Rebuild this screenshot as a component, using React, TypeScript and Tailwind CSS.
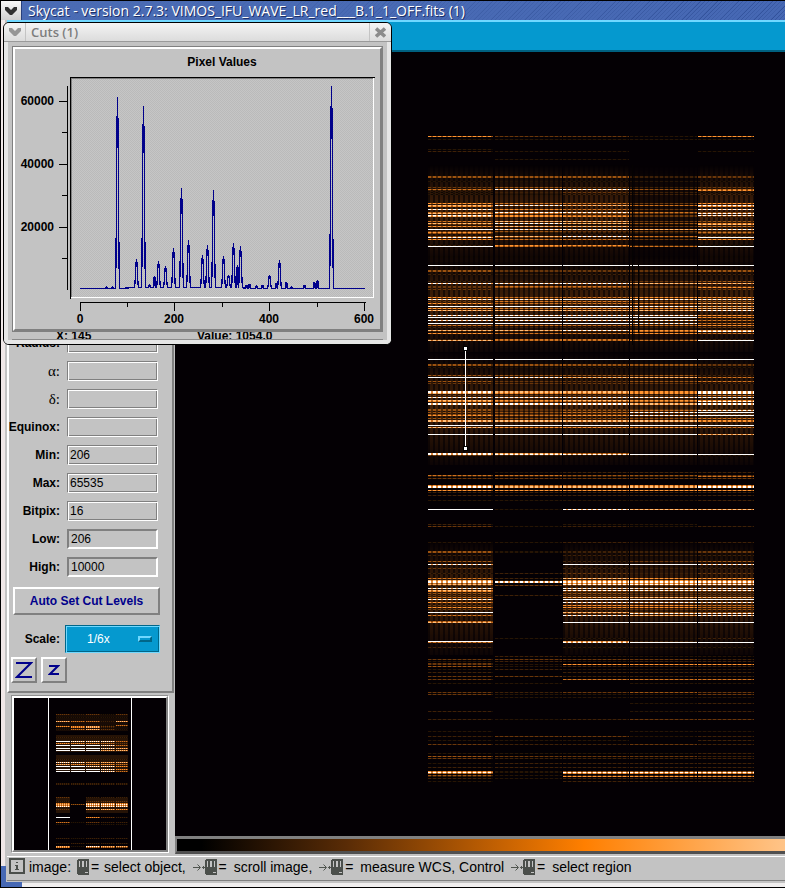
import React, { useState } from "react";
import { clsx } from "clsx";

type Row = [y: number, thickness: number, levels: string];

const SEGMENTS = [
  [428, 493],
  [495, 562],
  [563, 629],
  [630, 697],
  [698, 754],
];

const THUMB_SEGMENTS = [
  [56, 70],
  [71, 85],
  [86, 100],
  [101, 115],
  [116, 128],
];

// brightness 0-9 of the dashes and of the line under them
const BRIGHT = ["", "#261404", "#3e2007", "#6a360a", "#9c5210", "#d0721e", "#ff9430", "#ffc07c", "#ffffff", "#ffffff"];
const DIM = ["", "#0e0702", "#1a0d03", "#341a05", "#4e2806", "#743b0a", "#9c5010", "#c4661a", "#e08a3c", "#ffffff"];

// one digit for each of the five segments
const ROWS: Row[] = [
  [136, 1, "63316"], [139, 1, "11111"], [149, 1, "10000"], [151, 1, "21101"], [159, 1, "01100"],
  [176, 2, "44423"], [181, 1, "11111"], [187, 1, "34323"], [189, 1, "58845"], [190, 1, "20006"],
  [192, 1, "12321"], [194, 1, "11222"], [203, 1, "65536"], [205, 1, "78758"], [206, 1, "60006"],
  [209, 1, "86538"], [212, 1, "58854"], [213, 1, "75438"], [215, 1, "86538"], [216, 1, "76633"],
  [221, 1, "57734"], [223, 1, "78746"], [224, 1, "31117"], [226, 1, "67735"], [229, 1, "98878"],
  [231, 1, "34333"], [232, 1, "62225"], [233, 1, "41113"], [236, 1, "47853"], [237, 1, "83229"],
  [239, 1, "65536"], [245, 1, "26621"], [246, 1, "95459"], [265, 1, "99999"], [270, 2, "43334"],
  [274, 1, "22222"], [281, 1, "22234"], [283, 1, "88877"], [286, 1, "35533"], [287, 1, "34436"],
  [289, 1, "32223"], [297, 1, "65566"], [299, 1, "88988"], [301, 1, "35534"], [303, 1, "65567"],
  [306, 1, "99987"], [308, 1, "65667"], [310, 1, "77778"], [315, 1, "88886"], [317, 1, "99996"],
  [320, 1, "88885"], [323, 1, "99985"], [325, 1, "55556"], [327, 1, "22223"], [330, 1, "77867"],
  [331, 1, "22258"], [333, 1, "65565"], [339, 1, "25522"], [340, 1, "75559"], [359, 1, "99999"],
  [364, 2, "44443"], [367, 1, "11111"], [375, 1, "44442"], [377, 1, "98775"], [381, 1, "43345"],
  [383, 1, "33332"], [391, 2, "87768"], [393, 1, "76668"], [395, 1, "33335"], [397, 1, "88888"],
  [400, 1, "76766"], [401, 1, "65558"], [403, 2, "88878"], [409, 1, "43333"], [410, 1, "43458"],
  [412, 1, "44589"], [414, 1, "43323"], [415, 1, "65689"], [418, 1, "44445"], [420, 2, "77776"],
  [425, 1, "99999"], [427, 1, "76665"], [434, 1, "99997"], [453, 1, "87500"], [454, 1, "88899"],
  [455, 1, "32111"], [472, 1, "01222"], [475, 1, "55443"], [476, 1, "22225"], [478, 1, "33333"],
  [485, 1, "65566"], [486, 2, "87778"], [490, 1, "66666"], [492, 1, "22222"], [495, 1, "22222"],
  [500, 1, "11112"], [509, 1, "91877"], [524, 1, "20110"], [526, 1, "31212"], [542, 1, "11212"],
  [551, 2, "41223"], [555, 1, "20222"], [561, 1, "40234"], [564, 1, "80998"], [568, 1, "30222"],
  [573, 1, "22323"], [578, 1, "52766"], [580, 1, "71666"], [581, 2, "88888"], [583, 1, "50665"],
  [584, 1, "70888"], [585, 1, "33333"], [588, 1, "80888"], [590, 1, "70888"], [591, 1, "60333"],
  [593, 1, "40433"], [595, 1, "32333"], [597, 1, "50777"], [599, 1, "80999"], [602, 1, "60888"],
  [605, 1, "30665"], [607, 1, "60665"], [609, 1, "30334"], [612, 1, "90744"], [613, 1, "00388"],
  [615, 1, "50878"], [621, 1, "50000"], [622, 1, "70999"], [638, 1, "01112"], [641, 1, "90720"],
  [642, 1, "50899"], [647, 1, "20111"], [656, 1, "02111"], [659, 1, "33332"], [661, 1, "12122"],
  [663, 1, "30000"], [664, 1, "31666"], [666, 1, "41222"], [669, 1, "12111"], [672, 1, "20222"],
  [676, 1, "33222"], [679, 1, "30555"], [683, 1, "11011"], [692, 1, "32343"], [694, 1, "31113"],
  [697, 1, "01111"], [703, 1, "00012"], [711, 1, "20012"], [719, 1, "21233"], [731, 1, "10011"],
  [736, 1, "23312"], [740, 1, "11102"], [744, 1, "32232"], [753, 1, "11112"], [756, 1, "43332"],
  [758, 1, "32222"], [763, 1, "12222"], [767, 1, "22222"], [771, 1, "61444"], [772, 1, "81888"],
  [773, 1, "50666"], [775, 1, "41222"], [776, 1, "20666"], [778, 1, "21222"], [781, 1, "10222"],
];

const THUMB_ROWS: Row[] = [
  [714, 1, "32313"], [717, 1, "11111"], [721, 1, "75527"], [725, 1, "10015"], [726, 1, "66731"],
  [727, 1, "16720"], [729, 1, "15731"], [737, 1, "22222"], [741, 1, "98885"], [743, 1, "66653"],
  [745, 1, "99985"], [748, 1, "99987"], [750, 1, "99977"], [759, 1, "22222"], [762, 1, "88777"],
  [764, 1, "76665"], [766, 1, "99886"], [769, 1, "99986"], [771, 1, "99985"], [783, 2, "22222"],
  [797, 1, "30222"], [801, 1, "20333"], [803, 1, "60776"], [804, 1, "74888"], [805, 1, "60666"],
  [806, 1, "80888"], [809, 1, "30776"], [817, 1, "90632"], [822, 1, "51322"], [824, 1, "10111"],
  [838, 1, "21222"], [843, 1, "12222"], [846, 1, "71877"], [847, 1, "60554"],
];

function Lines({ rows, segments, dash }: { rows: Row[]; segments: number[][]; dash: string }) {
  return (
    <g>
      {rows.map(([y, t, levels]) =>
        segments.map(([x1, x2], i) => {
          const level = Number(levels[i]);
          if (!level) return null;
          const d = `M${x1} ${y + t / 2}H${x2}`;
          return (
            <g key={`${y}-${i}`} strokeWidth={t}>
              <path d={d} stroke={DIM[level]} />
              {level < 9 && <path d={d} stroke={BRIGHT[level]} strokeDasharray={dash} />}
            </g>
          );
        }),
      )}
    </g>
  );
}

// background glow behind the line groups: [top, bottom, opacity, segment mask]
const GLOWS: [number, number, number, string][] = [
  [165, 262, 0.8, "11101"],
  [165, 262, 0.3, "00010"],
  [256, 352, 0.8, "11111"],
  [352, 465, 0.8, "11111"],
  [540, 655, 0.8, "10111"],
];

function Spectrum() {
  return (
    <svg
      viewBox="175 52 610 784"
      className="block h-auto w-full"
      shapeRendering="crispEdges"
      fill="none"
      role="img"
      aria-label="Spectrum image"
    >
      <defs>
        <pattern id="fibres" width="5" height="8" patternUnits="userSpaceOnUse">
          <rect width="3" height="8" fill="#552b0a" />
          <rect x="3" width="2" height="8" fill="#241206" />
        </pattern>
        <linearGradient id="fade" x1="0" y1="0" x2="0" y2="1">
          <stop offset="0" stopColor="#000" />
          <stop offset=".25" stopColor="#999" />
          <stop offset=".5" stopColor="#fff" />
          <stop offset=".75" stopColor="#888" />
          <stop offset="1" stopColor="#222" />
        </linearGradient>
        {GLOWS.map(([top, bottom], i) => (
          <mask key={i} id={`glow${i}`} maskUnits="userSpaceOnUse" x="428" y={top} width="326" height={bottom - top}>
            <rect x="428" y={top} width="326" height={bottom - top} fill="url(#fade)" />
          </mask>
        ))}
      </defs>
      {GLOWS.map(([top, bottom, opacity, segs], i) => (
        <g key={i} mask={`url(#glow${i})`} opacity={opacity}>
          {SEGMENTS.map(
            ([x1, x2], s) =>
              segs[s] === "1" && (
                <rect key={s} x={x1} y={top} width={x2 - x1} height={bottom - top} fill="url(#fibres)" />
              ),
          )}
        </g>
      ))}
      <Lines rows={ROWS} segments={SEGMENTS} dash="3 2" />
      <path d="M632.500 165V345M638.500 265V333" stroke="#050202" />
      <path d="M465.500 348V448" stroke="#fff" />
      <path d="M463 346h5v5h-5zM463 446h5v5h-5z" fill="#000" />
      <path d="M464 347h3v3h-3zM464 447h3v3h-3z" fill="#fff" />
    </svg>
  );
}

function Thumbnail() {
  return (
    <svg
      viewBox="14 698 152 152"
      className="block h-auto w-full bg-[#040004]"
      shapeRendering="crispEdges"
      fill="none"
      role="img"
      aria-label="Overview image"
    >
      <g fill="#261306">
        <path d="M56 714h72v17h-72z" opacity=".6" />
        <path d="M56 735h72v17h-72zM56 755h72v17h-72zM56 798h14v15h-14zM86 798h42v15h-42z" />
      </g>
      <Lines rows={THUMB_ROWS} segments={THUMB_SEGMENTS} dash="1 1" />
      <path d="M48.500 698V850M131.500 698V850" stroke="#fff" />
    </svg>
  );
}

// x, top and half width of each emission line in the cut
const PEAKS = [
  [106, 287, 1], [112, 287, 1], [117, 97, 2], [136, 259, 2], [143, 106, 2], [149, 285, 1], [154, 276, 1],
  [158, 261, 2], [165, 266, 2], [173, 248, 2], [181, 188, 2], [188, 240, 2], [202, 255, 2],
  [207, 245, 2], [213, 190, 2], [223, 256, 2], [228, 275, 2], [233, 243, 2], [237, 265, 1],
  [240, 246, 2], [246, 285, 1], [249, 284, 1], [256, 286, 1], [262, 285, 1], [269, 275, 2],
  [276, 283, 1], [279, 260, 2], [286, 282, 1], [291, 287, 1], [304, 285, 1], [314, 282, 1], [317, 280, 1],
  [331, 86, 2],
];

function cutPath() {
  let d = "M80 288.500";
  PEAKS.forEach(([x, top, half]) => {
    const base = x > 120 && x < 245 ? 287.5 : 288.5;
    const c = x + 0.5;
    const foot = base - (base - top) * 0.15;
    const shoulder = top + (base - top) * 0.15;
    d += `L${c - half} ${base}L${c - half + 0.5} ${foot}L${c - 0.5} ${shoulder}L${c} ${top}`;
    d += `L${c + 0.5} ${shoulder}L${c + half - 0.5} ${foot}L${c + half} ${base}`;
  });
  return d + "L365 288.500";
}

function CutPlot() {
  return (
    <svg
      viewBox="15 49 365 280"
      className="block h-auto w-full"
      shapeRendering="crispEdges"
      fill="none"
      role="img"
      aria-label="Pixel Values"
    >
      <defs>
        <pattern id="dither" width="2" height="2" patternUnits="userSpaceOnUse">
          <rect width="2" height="2" fill="#c6c6c6" />
          <rect width="1" height="1" fill="#bababa" />
          <rect x="1" y="1" width="1" height="1" fill="#bababa" />
        </pattern>
      </defs>
      <rect x="71" y="78" width="303" height="220" fill="url(#dither)" />
      <path d="M71.500 297V78.500H374" stroke="#808080" />
      <path d="M71 297.500H373.500V78" stroke="#fff" />
      <path d="M70.500 299V77.500H375" stroke="#000" />
      <path
        d="M67.500 86V290M59 101.500H67M59 164.500H67M59 227.500H67M62 132.500H67M62 195.500H67M62 258.500H67"
        stroke="#000"
      />
      <path
        d="M80 302.500H366M80.500 302V311M174.500 302V311M269.500 302V311M364.500 302V311M127.500 302V307M222.500 302V307M317.500 302V307"
        stroke="#000"
      />
      <path d={cutPath()} stroke="#00008b" strokeWidth="1.3" strokeLinejoin="bevel" />
      <g
        fill="#000"
        className="font-['Liberation_Sans',Arial,sans-serif] text-[12px] font-bold"
        textAnchor="middle"
      >
        <text x="222" y="66">Pixel Values</text>
        <g textAnchor="end">
          <text x="54" y="105">60000</text>
          <text x="54" y="168">40000</text>
          <text x="54" y="231">20000</text>
        </g>
        <text x="80" y="323">0</text>
        <text x="174" y="323">200</text>
        <text x="269" y="323">400</text>
        <text x="364" y="323">600</text>
      </g>
    </svg>
  );
}

function Chevron({ className }: { className?: string }) {
  return (
    <svg viewBox="0 0 14 10" className={clsx("h-[10px] w-[14px]", className)} fill="currentColor">
      <path d="M1 1h3l3 3 3-3h3v3L8 9H6L1 4z" />
    </svg>
  );
}

function CutsWindow() {
  return (
    <section className="absolute left-[3px] top-[22px] w-[389px] overflow-hidden rounded-[6px] border border-black bg-[#c3c3c3]">
      <header className="flex h-[19px] items-stretch border-b border-[#9a9a9a] bg-linear-to-b from-[#f4f4f4] to-[#dcdcdc]">
        <button aria-label="Window menu" className="flex w-[22px] items-center justify-center border-r border-[#c4c4c4] text-[#969696]">
          <Chevron />
        </button>
        <h2 className="flex-1 pl-[5px] font-['Open_Sans',sans-serif] text-[13px] font-semibold leading-[18px] text-[#7d7d7d]">
          Cuts (1)
        </h2>
        <button aria-label="Close" className="flex w-[22px] items-center justify-center border-l border-[#c4c4c4] text-[#8c8c8c]">
          <svg viewBox="0 0 11 11" className="size-[11px]" stroke="currentColor" strokeWidth="3.6">
            <path d="M1 1.500 10 9.500M10 1.500 1 9.500" />
          </svg>
        </button>
      </header>
      <div className="border-x-4 border-b-4 border-[#e6e6e6] px-[4px] pt-[4px]">
        <div className="border border-[#808080]">
          <div className="border-2 border-b-[#808080] border-l-white border-r-[#808080] border-t-white">
            <CutPlot />
          </div>
        </div>
        <div className="flex h-[8px] items-center overflow-hidden border-b border-[#8a8a8a] text-[12px] font-bold leading-[12px]">
          <span className="w-[142px] pl-[44px]">X: 145</span>
          <span className="pl-[43px]">Value: 1054.0</span>
        </div>
      </div>
    </section>
  );
}

const FIELDS = [
  { id: "radius", label: "Radius:", value: "" },
  { id: "alpha", label: "α:", value: "", greek: true },
  { id: "delta", label: "δ:", value: "", greek: true },
  { id: "equinox", label: "Equinox:", value: "" },
  { id: "min", label: "Min:", value: "206" },
  { id: "max", label: "Max:", value: "65535" },
  { id: "bitpix", label: "Bitpix:", value: "16" },
  { id: "low", label: "Low:", value: "206", editable: true },
  { id: "high", label: "High:", value: "10000", editable: true },
];

function Sidebar() {
  const [scale, setScale] = useState("1/6x");

  return (
    <aside className="flex w-[167px] flex-1 flex-col justify-end border-2 border-b-[#808080] border-l-white border-r-[#808080] border-t-white pb-[8px]">
      <div className="flex flex-col gap-[8px] pr-[14px]">
        {FIELDS.map((f) => (
          <div key={f.id} className="flex h-[20px] items-center justify-end gap-[7px]">
            <label
              htmlFor={f.id}
              className={clsx(f.greek ? "font-['Liberation_Serif',serif] text-[15px]" : "text-[12px] font-bold", "leading-[20px]")}
            >
              {f.label}
            </label>
            <input
              id={f.id}
              defaultValue={f.value}
              readOnly={!f.editable}
              className={clsx(
                "h-[20px] w-[91px] px-[2px] text-[12px] outline-none",
                f.editable
                  ? "border-2 border-b-white border-l-[#808080] border-r-white border-t-[#808080]"
                  : "border border-b-white border-l-[#808080] border-r-white border-t-[#808080] shadow-[inset_1px_1px_0_#fff,inset_-1px_-1px_0_#808080]",
              )}
            />
          </div>
        ))}
      </div>
      <button className="ml-[4px] mt-[10px] h-[28px] w-[147px] border-2 border-b-[#808080] border-l-white border-r-[#808080] border-t-white text-[12px] font-bold text-[#00008b]">
        Auto Set Cut Levels
      </button>
      <div className="mt-[10px] flex h-[28px] items-center justify-end gap-[5px] pr-[12px]">
        <label htmlFor="scale" className="text-[12px] font-bold">
          Scale:
        </label>
        <div className="relative">
          <select
            id="scale"
            value={scale}
            onChange={(e) => setScale(e.target.value)}
            className="h-[28px] w-[95px] appearance-none border border-[#006688] border-b-[#70d8ff] border-r-[#70d8ff] bg-[#0599cf] pl-[21px] text-[12px] text-white shadow-[inset_1px_1px_0_#70d8ff,inset_-1px_-1px_0_#006688]"
          >
            <option>1/6x</option>
            <option>1x</option>
            <option>2x</option>
          </select>
          <span className="pointer-events-none absolute right-[8px] top-[11px] h-[6px] w-[14px] border-2 border-b-[#006688] border-l-[#70d8ff] border-r-[#006688] border-t-[#70d8ff]" />
        </div>
      </div>
      <div className="mt-[4px] flex gap-[4px] pl-[2px]">
        <button className="flex size-[26px] items-center justify-center border-2 border-b-[#808080] border-l-white border-r-[#808080] border-t-white" aria-label="Zoom in">
          <svg viewBox="0 0 18 18" className="size-[18px]" fill="none" stroke="#00008b" strokeWidth="2">
            <path d="M1 2H16L2 16H17" />
          </svg>
        </button>
        <button className="flex size-[26px] items-center justify-center border-2 border-b-[#808080] border-l-white border-r-[#808080] border-t-white" aria-label="Zoom out">
          <svg viewBox="0 0 12 12" className="size-[12px]" fill="none" stroke="#00008b" strokeWidth="2">
            <path d="M1 2H10L2 10H11" />
          </svg>
        </button>
      </div>
    </aside>
  );
}

function Mouse({ drag }: { drag?: boolean }) {
  return (
    <>
      {drag && (
        <svg viewBox="0 0 12 9" className="ml-[3px] h-[9px] w-[12px] shrink-0" fill="none" stroke="#50554f">
          <path d="M0 4.500H7M4.500 1.500 7.500 4.500 4.500 7.500M9 4.500H12M10.500 3V6" />
        </svg>
      )}
      <svg viewBox="0 0 12 16" className="h-[16px] w-[12px] shrink-0" shapeRendering="crispEdges">
        <path d="M1 0h10l1 1v14l-1 1H1l-1-1V1z" fill="#4b4f4b" />
        <path d="M2 2h1v6H2zM5 2h2v6H5zM9 2h1v6H9zM8 13h3v1H8z" fill="#c3c3c3" />
      </svg>
    </>
  );
}

function StatusBar() {
  return (
    <footer className="mt-[2px] flex h-[25px] items-start border-b border-t border-b-[#808080] border-t-white pl-[2px] pt-px text-[14px] leading-[18px]">
      <svg viewBox="0 0 16 16" className="mr-[4px] size-[16px] shrink-0" shapeRendering="crispEdges">
        <path d="M1 1h14v14H1z" fill="none" stroke="#4b4f4b" strokeWidth="2" />
        <path d="M7 4h2v1H7zM6 7h3v4h1v1H6v-1h1V8H6z" fill="#4b4f4b" />
      </svg>
      <p className="flex items-center whitespace-pre">
        <span className="pr-[2px]">image: </span>
        <Mouse />
        <span className="pl-[2px]">= </span>
        <span className="pl-px">select object, </span>
        <Mouse drag />
        <span className="pl-[2px]">= </span>
        <span className="pl-[3px]">scroll image, </span>
        <Mouse drag />
        <span className="pl-[2px]">= </span>
        <span className="pl-[3px]">measure WCS, Control </span>
        <Mouse drag />
        <span className="pl-[2px]">= </span>
        <span className="pl-[3px]">select region</span>
      </p>
    </footer>
  );
}

export default function App() {
  return (
    <div className="relative flex min-h-screen flex-col overflow-hidden bg-black pl-px font-['Liberation_Sans',Arial,sans-serif] text-black">
      <header className="flex h-[20px] items-stretch border-t border-black bg-[repeating-linear-gradient(135deg,#4668b4_0px,#4668b4_2px,#2f4f98_3px)]">
        <button aria-label="Window menu" className="flex w-[21px] items-center justify-center border-r border-[#28407c] bg-linear-to-b from-[#f8f8f8] to-[#cfcfcf] text-[#303030]">
          <Chevron />
        </button>
        <h1 className="flex-1 bg-linear-to-r from-[#4b6cb4] via-[#4b6cb4]/60 to-transparent pl-[6px] font-['Open_Sans',sans-serif] text-[14px] font-medium leading-[19px] text-white [text-shadow:1px_1px_0_#1c3068]">
          Skycat - version 2.7.3: VIMOS_IFU_WAVE_LR_red___B.1_1_OFF.fits (1)
        </h1>
      </header>
      <div className="flex flex-1 flex-col border-b-4 border-l-4 border-b-[#f0eeee] border-l-[#f0e8e8] bg-[#c3c3c3] pb-[2px] pl-[2px]">
        <nav aria-label="Menu" className="h-[32px] border-b-2 border-t-2 border-b-[#006080] border-t-[#70d8ff] bg-[#0599cf]" />
        <div className="flex flex-1">
          <div className="flex w-[168px] shrink-0 flex-col">
            <Sidebar />
            <div className="mb-px ml-[4px] mt-[2px] w-[158px] border border-b-white border-l-[#909090] border-r-white border-t-[#909090]">
              <div className="border-2 border-b-[#808080] border-l-white border-r-[#808080] border-t-white">
                <Thumbnail />
              </div>
            </div>
          </div>
          <main className="flex min-w-0 flex-1 flex-col bg-[#040004]">
            <div className="flex-1">
              <Spectrum />
            </div>
            <div className="h-[18px] border-b-[3px] border-l-2 border-t-[3px] border-b-[#505050] border-l-[#808080] border-t-[#808080] bg-[linear-gradient(90deg,#000_4%,#5a2c06_28%,#ff7f00_67%,#ffc488_100%)]" />
          </main>
        </div>
        <StatusBar />
      </div>
      <div className="h-px bg-black" />
      <div className="absolute bottom-px left-px h-[21px] w-[21px] border-b-[5px] border-l-[5px] border-[#4668b4]" />
      <CutsWindow />
    </div>
  );
}
